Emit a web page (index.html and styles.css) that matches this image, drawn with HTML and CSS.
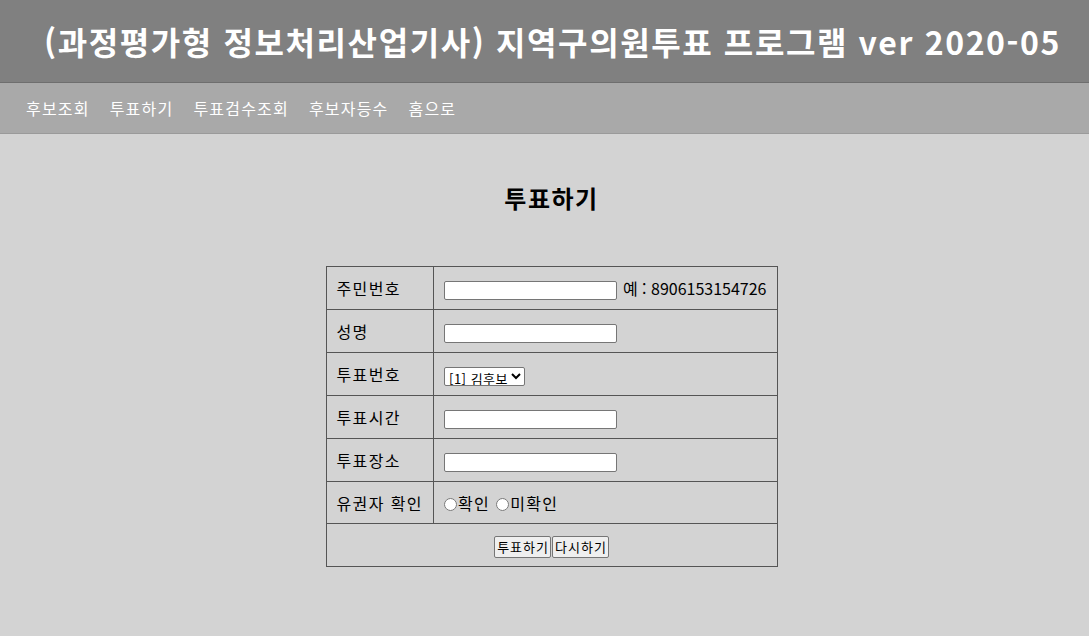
FILE: index.html
```html
<!DOCTYPE html>
<html lang="ko">
<head>
<meta charset="utf-8">
<title>투표하기</title>
<link rel="stylesheet" href="styles.css">
</head>
<body>
<header class="top">
  <h1 class="title">(과정평가형 정보처리산업기사) 지역구의원투표 프로그램 ver 2020-05</h1>
</header>
<nav class="menu">
  <a href="#">후보조회</a>
  <a href="#">투표하기</a>
  <a href="#">투표검수조회</a>
  <a href="#">후보자등수</a>
  <a href="#">홈으로</a>
</nav>
<main class="content">
  <h2 class="heading">투표하기</h2>
  <form class="vote-form">
    <table class="vote">
      <tr>
        <td class="label">주민번호</td>
        <td class="field"><input type="text" class="txt"> <span class="ex">예 : 8906153154726</span></td>
      </tr>
      <tr>
        <td class="label">성명</td>
        <td class="field"><input type="text" class="txt"></td>
      </tr>
      <tr>
        <td class="label">투표번호</td>
        <td class="field"><select class="sel"><option>[1] 김후보</option></select></td>
      </tr>
      <tr>
        <td class="label">투표시간</td>
        <td class="field"><input type="text" class="txt"></td>
      </tr>
      <tr>
        <td class="label">투표장소</td>
        <td class="field"><input type="text" class="txt"></td>
      </tr>
      <tr class="short">
        <td class="label">유권자 확인</td>
        <td class="field"><label class="radio"><input type="radio" name="v">확인</label> <label class="radio"><input type="radio" name="v">미확인</label></td>
      </tr>
      <tr>
        <td class="buttons" colspan="2"><button type="button" class="btn">투표하기</button><button type="button" class="btn">다시하기</button></td>
      </tr>
    </table>
  </form>
</main>
</body>
</html>
```
FILE: styles.css
```css
html, body {
  margin: 0;
  padding: 0;
  background: #d3d3d3;
  font-family: "Noto Sans CJK KR", "Noto Sans", sans-serif;
  color: #000;
}
.top {
  background: #808080;
  height: 82px;
  border-bottom: 1px solid #6e6e6e;
  display: flex;
  align-items: center;
  padding-left: 44px;
}
.title {
  margin: 0;
  color: #fff;
  font-size: 32px;
  font-weight: bold;
  line-height: 1;
  white-space: nowrap;
  letter-spacing: 1.6px;
}
.menu {
  background: #a9a9a9;
  height: 50px;
  border-bottom: 1px solid #9a9a9a;
  display: flex;
  align-items: center;
  gap: 20px;
  padding-left: 26px;
}
.menu a {
  color: #fff;
  text-decoration: none;
  font-size: 16px;
  letter-spacing: 1.2px;
}
.content {
  display: flex;
  flex-direction: column;
  align-items: center;
  padding-left: 14px;
}
.heading {
  margin: 48px 0 52px;
  font-size: 24px;
  font-weight: bold;
  line-height: 32px;
  letter-spacing: 1.5px;
}
.vote {
  border-collapse: collapse;
  border: 1px solid #555;
  width: 452px;
}
.vote td {
  border: 1px solid #555;
  height: 43px;
  padding: 0 10px;
  font-size: 16px;
  letter-spacing: 1.4px;
  box-sizing: border-box;
}
.vote .short td {
  height: 42px;
}
.vote td.label {
  width: 104px;
  white-space: nowrap;
}
.ex {
  letter-spacing: 0;
}
.txt {
  width: 173px;
  height: 19px;
  box-sizing: border-box;
  border: 1px solid #767676;
  border-radius: 2px;
  background: #fff;
  padding: 1px 2px;
  font-size: 13px;
  vertical-align: middle;
}
.sel {
  font-family: "Noto Sans CJK KR", sans-serif;
  font-size: 13px;
  letter-spacing: 0.5px;
  height: 19px;
  border: 1px solid #767676;
  border-radius: 2px;
  background: #fff;
  padding: 0;
  vertical-align: middle;
}
.radio input {
  margin: 0 1px 0 0;
  width: 13px;
  height: 13px;
  vertical-align: -1px;
}
.buttons {
  text-align: center;
}
.btn {
  font-family: "Noto Sans CJK KR", sans-serif;
  font-size: 13px;
  letter-spacing: 1px;
  height: 22px;
  padding: 0 1px 0 2px;
  margin: 0;
  border: 1px solid #767676;
  border-radius: 2px;
  background: #efefef;
  vertical-align: middle;
  line-height: 18px;
}
.btn + .btn {
  margin-left: 1px;
}
```
